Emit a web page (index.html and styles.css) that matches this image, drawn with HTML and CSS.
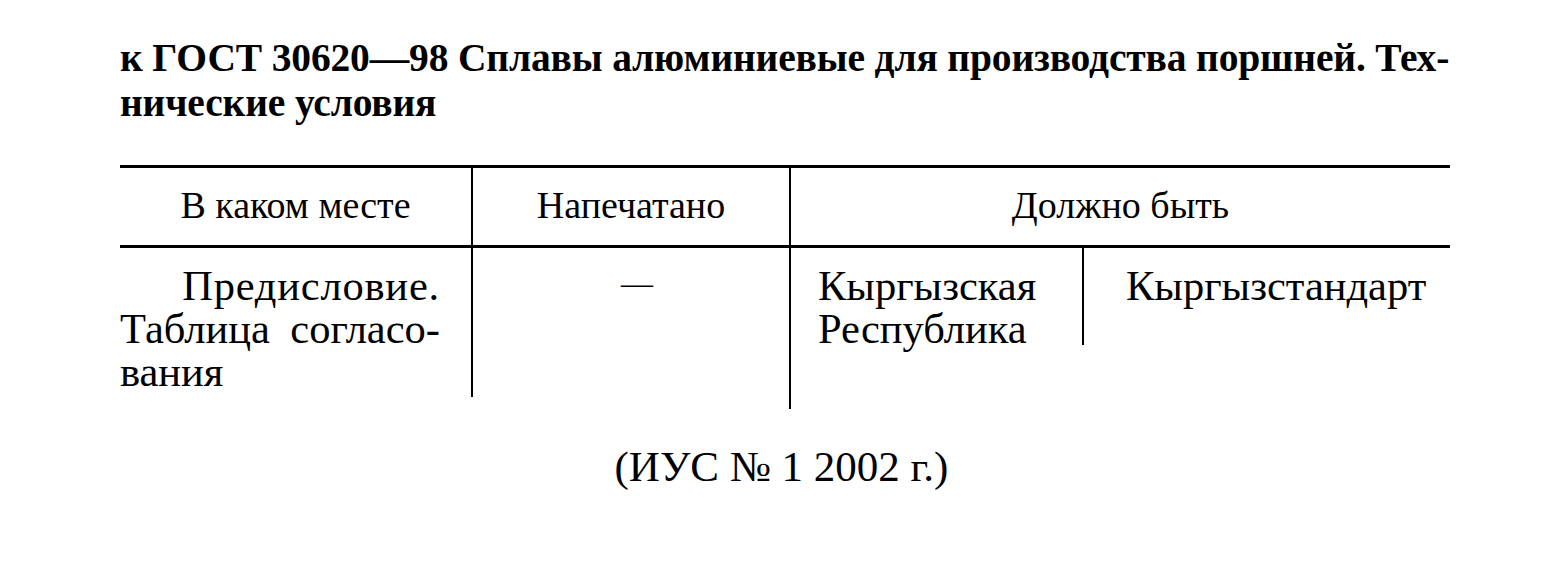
FILE: index.html
```html
<!DOCTYPE html>
<html lang="ru">
<head>
<meta charset="utf-8">
<title>ГОСТ 30620—98 поправка</title>
<link rel="stylesheet" href="styles.css">
</head>
<body>
<div class="page">
  <h1 class="title">к ГОСТ 30620—98 Сплавы алюминиевые для производства поршней. Тех-<br>нические условия</h1>
  <div class="amend">
    <div class="head h1c">В каком месте</div>
    <div class="head h2c">Напечатано</div>
    <div class="head h3c">Должно быть</div>
    <div class="cell where"><span class="first">Предисловие.</span><span class="just">Таблица согласо-</span><span>вания</span></div>
    <div class="cell printed">—</div>
    <div class="cell country">Кыргызская<br>Республика</div>
    <div class="cell body4">Кыргызстандарт</div>
  </div>
  <p class="ius">(ИУС № 1 2002 г.)</p>
</div>
</body>
</html>
```

FILE: styles.css
```css
html, body {
  margin: 0;
  padding: 0;
  background: #fff;
}
body {
  font-family: "Liberation Serif", "Times New Roman", serif;
  color: #000;
}
.page {
  width: 1330px;
  padding: 36px 0 0 120px;
}
.title {
  margin: 0;
  font-size: 39.5px;
  line-height: 45px;
  font-weight: bold;
  letter-spacing: -0.15px;
}
.amend {
  margin-top: 39px;
  display: grid;
  grid-template-columns: 353px 318px 291px 368px;
  align-items: start;
  border-top: 3px solid #000;
}
.head {
  display: flex;
  align-items: center;
  justify-content: center;
  font-size: 38px;
  border-bottom: 3px solid #000;
  box-sizing: border-box;
  height: 80px;
  padding-bottom: 4px;
}
.h1c, .h2c {
  border-right: 2px solid #000;
}
.h3c {
  grid-column: 3 / 5;
}
.cell {
  font-size: 42.5px;
  line-height: 43px;
  padding-top: 16px;
  box-sizing: border-box;
}
.where {
  display: flex;
  flex-direction: column;
  padding-right: 31px;
  height: 149px;
  border-right: 2px solid #000;
}
.where .first {
  text-align: right;
  letter-spacing: 0.8px;
}
.where .just {
  text-align: justify;
  text-align-last: justify;
}
.printed {
  text-align: center;
  font-size: 32px;
  height: 161px;
  padding-top: 14px;
  padding-left: 12px;
  border-right: 2px solid #000;
}
.country {
  padding-left: 27px;
}
.body4 {
  padding-left: 42px;
  height: 97px;
  border-left: 2px solid #000;
}
.ius {
  margin: 33px 0 0;
  padding-right: 7px;
  text-align: center;
  font-size: 43px;
}
```
